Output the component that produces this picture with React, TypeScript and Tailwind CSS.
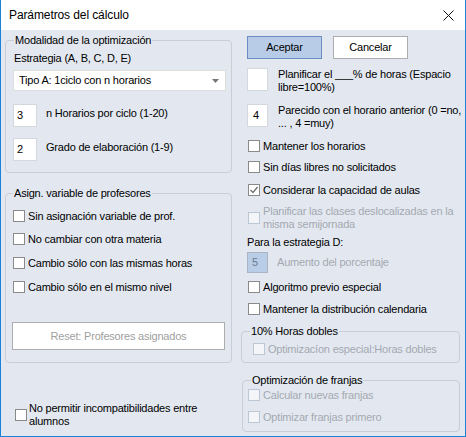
import React from 'react';

const font = { fontFamily: '"Liberation Sans", Arial, sans-serif' };

function Check({ label, checked = false, disabled = false, className = '', gap = 'ml-[3px]' }: { label: React.ReactNode; checked?: boolean; disabled?: boolean; className?: string; gap?: string }) {
  return (
    <div className={`flex items-center ${className}`}>
      <span
        className={`w-[12px] h-[12px] shrink-0 border flex items-center justify-center ${
          disabled ? 'border-[#bcc7d6] bg-[#f3f5f9]' : 'border-[#8a8a8a] bg-white'
        }`}
      >
        {checked && (
          <svg width="10" height="10" viewBox="0 0 10 10">
            <polyline points="1.5,5 4,7.5 8.5,2" fill="none" stroke="#6f6f6f" strokeWidth="1.3" />
          </svg>
        )}
      </span>
      <span className={`${gap} leading-[13px] ${disabled ? 'text-[#a3a8b0]' : 'text-black'}`}>{label}</span>
    </div>
  );
}

function Group({ title, className, children, legendLeft = 'left-[8px]' }: { title: string; className: string; children: React.ReactNode; legendLeft?: string }) {
  return (
    <div className={`relative border border-[#c9ced6] rounded-[4px] ${className}`}>
      <span className={`absolute -top-[8px] ${legendLeft} px-[1px] bg-[#e3e8f0] leading-[14px] text-black`}>{title}</span>
      {children}
    </div>
  );
}

export default function App() {
  return (
    <div
      className="w-[466px] h-[437px] flex flex-col border-l border-r border-b border-[#1a83d8] text-[11px] tracking-[-0.2px] whitespace-nowrap overflow-hidden"
      style={font}
    >
      <div className="h-[30px] shrink-0 bg-white flex items-center justify-between pl-[8px] pr-[11px]">
        <span className="text-[12px] tracking-[-0.1px] text-black">Parámetros del cálculo</span>
        <svg width="11" height="11" viewBox="0 0 11 11">
          <path d="M0.5 0.5 L10.5 10.5 M10.5 0.5 L0.5 10.5" stroke="#111" strokeWidth="1" />
        </svg>
      </div>

      <div className="flex-1 bg-[#e3e8f0] flex pl-[4px]">
        {/* left column */}
        <div className="w-[227px] shrink-0 flex flex-col">
          <Group title="Modalidad de la optimización" className="mt-[10px] h-[133px] pt-[10px] pl-[8px]">
            <div className="leading-[14px] h-[14px]">Estrategia (A, B, C, D, E)</div>
            <div className="mt-[5px] -ml-[1px] w-[213px] h-[21px] bg-white border border-[#dcdcdc] flex items-center justify-between pl-[5px] pr-[6px]">
              <span>Tipo A: 1ciclo con n horarios</span>
              <svg width="7" height="4" viewBox="0 0 7 4">
                <polygon points="0,0 7,0 3.5,4" fill="#777" />
              </svg>
            </div>
            <div className="mt-[13px] -ml-[1px] flex items-start">
              <div className="w-[24px] h-[23px] bg-white border border-[#d3d8df] pl-[3px] leading-[20px]">3</div>
              <span className="ml-[9px] mt-[2px] leading-[14px]">n Horarios por ciclo (1-20)</span>
            </div>
            <div className="mt-[11px] -ml-[1px] flex items-start">
              <div className="w-[24px] h-[23px] bg-white border border-[#d3d8df] pl-[3px] leading-[20px]">2</div>
              <span className="ml-[9px] mt-[2px] leading-[14px]">Grado de elaboración (1-9)</span>
            </div>
          </Group>

          <Group title="Asign. variable de profesores" className="mt-[20px] h-[170px] pt-[15px] pl-[7px]" legendLeft="left-[7px]">
            <Check label="Sin asignación variable de prof." className="h-[14px]" />
            <Check label="No cambiar con otra materia" className="h-[14px] mt-[9px]" />
            <Check label="Cambio sólo con las mismas horas" className="h-[14px] mt-[10px]" />
            <Check label="Cambio sólo en el mismo nivel" className="h-[14px] mt-[10px]" />
            <div className="mt-[28px] -ml-[1px] w-[213px] h-[28px] bg-white border border-[#adadad] flex items-center justify-center text-[#a0a0a0]">
              Reset: Profesores asignados
            </div>
          </Group>

          <Check
            label={<>No permitir incompatibilidades entre<br />alumnos</>}
            className="mt-[39px] ml-[10px]"
            gap="ml-[2px]"
          />
        </div>

        {/* right column */}
        <div className="ml-[8px] w-[220px] shrink-0 flex flex-col">
          <div className="mt-[6px] ml-[7px] flex">
            <div className="w-[75px] h-[23px] bg-[#b8cce8] border border-[#6a8ec4] flex items-center justify-center">Aceptar</div>
            <div className="ml-[11px] w-[75px] h-[23px] bg-white border border-[#adadad] flex items-center justify-center">Cancelar</div>
          </div>

          <div className="mt-[9px] ml-[7px] flex items-start">
            <div className="w-[21px] h-[23px] shrink-0 bg-white border border-[#d3d8df]" />
            <span className="ml-[10px] leading-[13px]">Planificar el ___% de horas (Espacio<br />libre=100%)</span>
          </div>
          <div className="mt-[10px] ml-[7px] flex items-start">
            <div className="w-[21px] h-[23px] shrink-0 bg-white border border-[#d3d8df] pl-[5px] leading-[20px]">4</div>
            <span className="ml-[10px] leading-[13px]">Parecido con el horario anterior (0 =no,<br />... , 4 =muy)</span>
          </div>

          <Check label="Mantener los horarios" className="mt-[9px] ml-[8px] h-[14px]" />
          <Check label="Sin días libres no solicitados" className="mt-[7px] ml-[8px] h-[14px]" />
          <Check label="Considerar la capacidad de aulas" checked className="mt-[9px] ml-[8px] h-[14px]" />
          <Check
            label={<>Planificar las clases deslocalizadas en la<br />misma semijornada</>}
            disabled
            className="mt-[8px] ml-[8px]"
          />
          <div className="mt-[4px] ml-[7px] h-[14px] leading-[14px]">Para la estrategia D:</div>
          <div className="mt-[3px] ml-[7px] flex items-center">
            <div className="w-[21px] h-[21px] bg-[#b9cde6] border border-[#a9b5c6] pl-[4px] leading-[19px] text-[#6b7a8c]">5</div>
            <span className="ml-[9px] text-[#a3a8b0]">Aumento del porcentaje</span>
          </div>
          <Check label="Algoritmo previo especial" className="mt-[7px] ml-[8px] h-[14px]" />
          <Check label="Mantener la distribución calendaria" className="mt-[8px] ml-[8px] h-[14px]" />

          <Group title="10% Horas dobles" className="mt-[15px] ml-[1px] w-[219px] h-[32px] pt-[10px] pl-[11px]">
            <Check label="Optimizacíon especial:Horas dobles" disabled className="h-[14px]" />
          </Group>

          <Group title="Optimización de franjas" className="mt-[17px] ml-[2px] w-[218px] h-[52px] pt-[7px] pl-[5px]">
            <Check label="Calcular nuevas franjas" disabled className="h-[14px]" />
            <Check label="Optimizar franjas primero" disabled className="h-[14px] mt-[8px]" />
          </Group>
        </div>
      </div>
    </div>
  );
}
